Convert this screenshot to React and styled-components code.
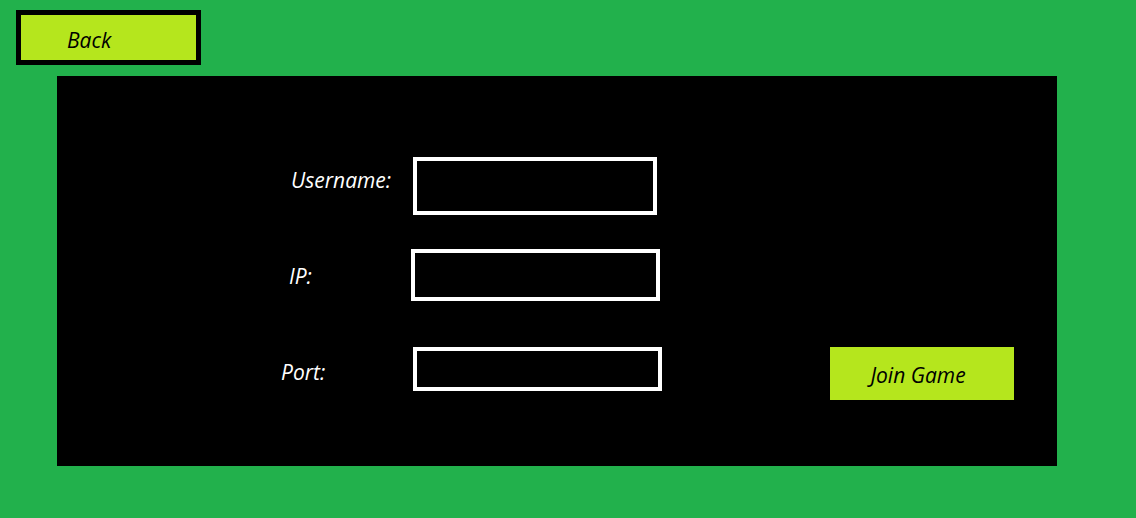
import React from 'react';
import styled, { createGlobalStyle } from 'styled-components';

const GlobalStyle = createGlobalStyle`
  html, body {
    margin: 0;
    padding: 0;
    background: #22b14c;
  }
  body {
    width: 1136px;
    height: 518px;
    overflow: hidden;
    font-family: "Open Sans", "Lato", sans-serif;
  }
`;

const Page = styled.div`
  display: flex;
  flex-direction: column;
  padding: 10px 0 0 16px;
`;

const BackButton = styled.button`
  box-sizing: border-box;
  width: 185px;
  height: 55px;
  border: 5px solid #000;
  background: #b5e61d;
  padding: 4px 0 0 46px;
  text-align: left;
  font-family: inherit;
  font-style: italic;
  font-size: 21px;
  color: #000;
  cursor: pointer;
`;

/* black panel holding the form */
const Panel = styled.div`
  box-sizing: border-box;
  display: flex;
  width: 1000px;
  height: 390px;
  margin: 11px 0 0 41px;
  padding: 81px 43px 0 224px;
  background: #000;
`;

const Form = styled.div`
  display: flex;
  flex-direction: column;
`;

const Row = styled.div`
  display: flex;
  align-items: flex-start;
  margin-top: ${p => p.gap || 0}px;
`;

const Label = styled.label`
  box-sizing: border-box;
  width: 130px;
  padding-left: ${p => p.indent || 0}px;
  margin-top: ${p => p.drop || 0}px;
  line-height: 24px;
  font-style: italic;
  font-size: 21px;
  color: #fff;
`;

const Input = styled.input`
  box-sizing: border-box;
  width: ${p => p.w}px;
  height: ${p => p.h}px;
  margin-left: ${p => p.shift || 0}px;
  border: 4px solid #fff;
  background: #000;
  color: #fff;
  outline: none;
  padding: 0 8px;
  font-size: 18px;
`;

const JoinButton = styled.button`
  width: 184px;
  height: 53px;
  margin: 190px 0 0 auto;
  border: none;
  background: #b5e61d;
  font-family: inherit;
  font-style: italic;
  font-size: 21px;
  color: #000;
  padding: 2px 8px 0 0;
  cursor: pointer;
`;

export default function App() {
  return (
    <>
      <GlobalStyle />
      <Page>
        <BackButton>Back</BackButton>
        <Panel>
          <Form>
            <Row>
              <Label indent={10} drop={11}>Username:</Label>
              <Input w={244} h={58} shift={2} />
            </Row>
            <Row gap={34}>
              <Label indent={8} drop={15}>IP:</Label>
              <Input w={249} h={52} />
            </Row>
            <Row gap={46}>
              <Label drop={13}>Port:</Label>
              <Input w={249} h={44} shift={2} />
            </Row>
          </Form>
          <JoinButton>Join Game</JoinButton>
        </Panel>
      </Page>
    </>
  );
}
